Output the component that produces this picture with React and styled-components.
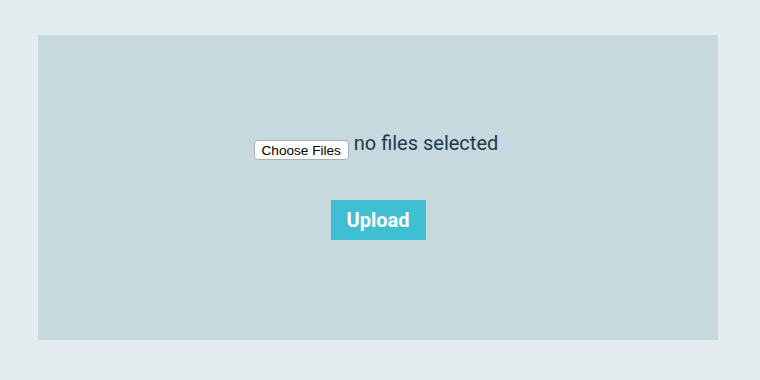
import React from 'react';
import styled, { createGlobalStyle } from 'styled-components';

const GlobalStyle = createGlobalStyle({
  'html, body': {
    margin: 0,
    padding: 0,
    background: '#e4ecf0',
  },
  body: {
    fontFamily: 'Roboto, "Liberation Sans", sans-serif',
  },
});

const Page = styled.div({
  width: '760px',
  height: '380px',
  padding: '35px 42px 40px 38px',
  boxSizing: 'border-box',
});

const Panel = styled.div({
  height: '100%',
  background: '#c6d9de',
  display: 'flex',
  flexDirection: 'column',
  alignItems: 'center',
  paddingTop: '97px',
  boxSizing: 'border-box',
});

const FileRow = styled.label({
  display: 'flex',
  alignItems: 'flex-end',
  gap: '5px',
  cursor: 'pointer',
  marginLeft: '-4px',
});

const HiddenInput = styled.input({
  display: 'none',
});

const ChooseButton = styled.span({
  display: 'inline-flex',
  alignItems: 'center',
  justifyContent: 'center',
  width: '95px',
  height: '20px',
  boxSizing: 'border-box',
  background: '#fff',
  border: '1px solid #a9b1b5',
  borderRadius: '4px',
  fontFamily: '"Liberation Sans", Arial, sans-serif',
  fontSize: '13.6px',
  color: '#000',
  marginBottom: '-5px',
});

const FileStatus = styled.span({
  fontFamily: 'Roboto, sans-serif',
  fontSize: '20px',
  lineHeight: '23px',
  color: '#1d3a4c',
});

const UploadButton = styled.button({
  marginTop: '45px',
  width: '95px',
  height: '40px',
  border: 'none',
  background: '#40bfd3',
  color: '#fff',
  fontFamily: 'Roboto, sans-serif',
  fontWeight: 700,
  fontSize: '20px',
  cursor: 'pointer',
});

class App extends React.Component {
  render () {
    return (
      <Page>
        <GlobalStyle />
        <Panel>
          <FileRow>
            <HiddenInput type="file" multiple />
            <ChooseButton>Choose Files</ChooseButton>
            <FileStatus>no files selected</FileStatus>
          </FileRow>
          <UploadButton>Upload</UploadButton>
        </Panel>
      </Page>
    );
  }
}

export default App;
